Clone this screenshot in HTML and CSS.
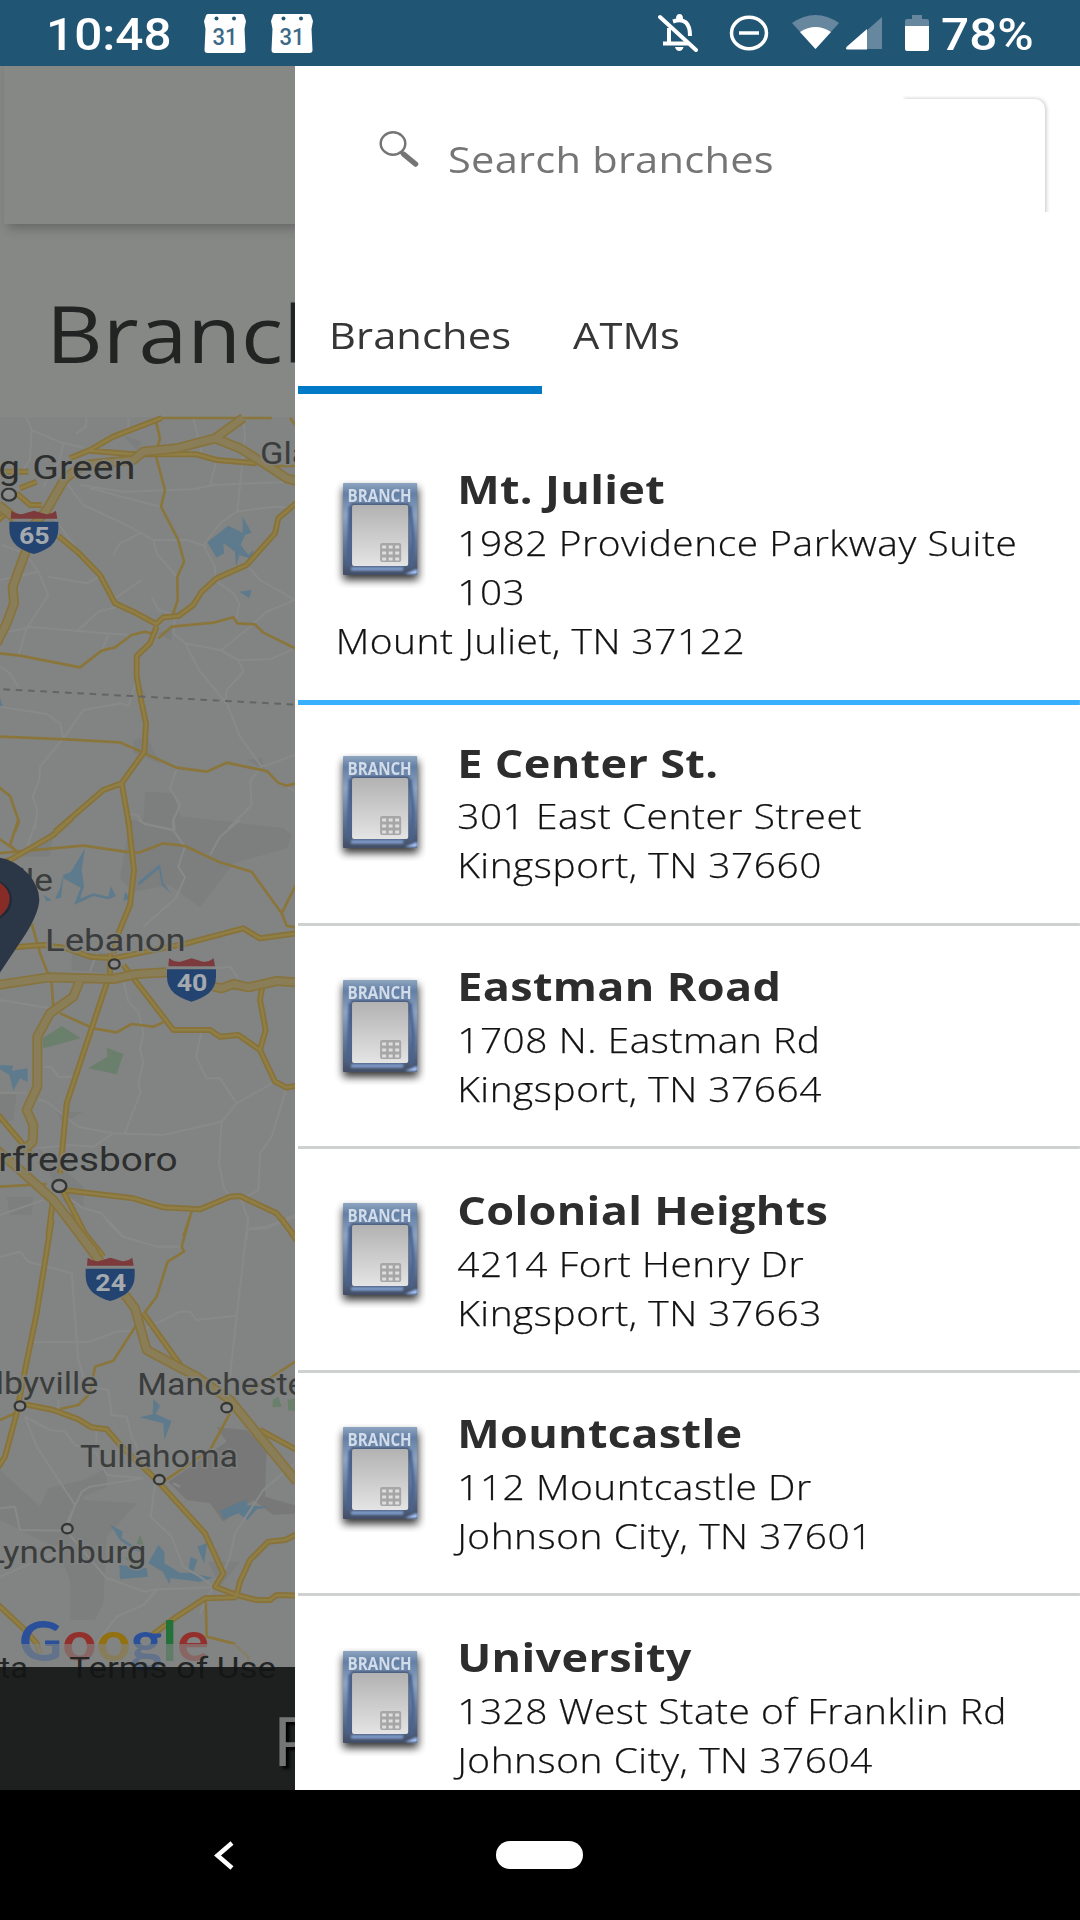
FILE: index.html
```html
<!DOCTYPE html>
<html lang="en">
<head>
    <meta charset="UTF-8">
    <meta name="viewport" content="width=device-width, initial-scale=1.0">
    <title>Branches</title>
    <link rel="stylesheet" href="styles.css">
</head>
<body>

<!-- shared symbols -->
<svg class="symbols" width="0" height="0">
    <defs>
        <linearGradient id="frame" x1="0" y1="0" x2="0" y2="1">
            <stop offset="0" stop-color="#8ea5c0"/>
            <stop offset=".12" stop-color="#637fa5"/>
            <stop offset=".35" stop-color="#8da3c2"/>
            <stop offset=".7" stop-color="#5f7598"/>
            <stop offset="1" stop-color="#434e66"/>
        </linearGradient>
        <linearGradient id="face" x1="0" y1="0" x2="0" y2="1">
            <stop offset="0" stop-color="#b2b2b2"/>
            <stop offset="1" stop-color="#e4e4e4"/>
        </linearGradient>
        <filter id="soft" x="-30%" y="-30%" width="160%" height="160%"><feGaussianBlur stdDeviation="4"/></filter>
        <filter id="smudge"><feGaussianBlur stdDeviation=".9"/></filter>
        <symbol id="branch" viewBox="0 0 92 108">
            <rect x="9" y="8" width="75" height="92" fill="#000" opacity=".8" filter="url(#soft)"/>
            <rect x="9" y="3" width="74" height="92" rx="1" fill="url(#frame)"/>
            <g filter="url(#smudge)">
                <path d="M16 26 14 86M76 26 79 60 77 88" fill="none" stroke="#48628f" stroke-width="3"/>
                <path d="M17 89h52" stroke="#86a4d8" stroke-width="3"/>
                <path d="M71 94l12-5v5z" fill="#a9c8ff"/>
                <rect x="17" y="23" width="58" height="64" rx="1" fill="#4c5f80"/>
            </g>
            <rect x="18" y="25" width="56" height="61" rx="2" fill="url(#face)"/>
            <rect x="46" y="63" width="21" height="19" rx="2" fill="#a6a6a6"/>
            <path d="M48 67h17M48 73h17M48 79h17" stroke="#dedede" stroke-width="3" stroke-dasharray="4 2.500"/>
            <text x="13.500" y="22.500" textLength="64" lengthAdjust="spacingAndGlyphs" class="branch-word">BRANCH</text>
        </symbol>
        <symbol id="calendar" viewBox="0 0 42 39">
            <path d="M4 0h34q2 0 2.500 3L42 7l-1.500 8 1 21q0 3-3 3h-35q-3 0-3-3l1-21L0 7l1.500-4Q2 0 4 0z" fill="#fff"/>
            <circle cx="12.500" cy="4.500" r="2" fill="#215574"/>
            <circle cx="30" cy="4.500" r="2" fill="#215574"/>
            <text x="8.500" y="30.500" textLength="25" lengthAdjust="spacingAndGlyphs" class="calendar-day">31</text>
        </symbol>
        <symbol id="shield" viewBox="0 0 150 132" overflow="visible">
            <path d="M6 0Q24 13 40 10L74 0l34 10q16 3 32-10l4 24H4z" fill="#7d3a3c"/>
            <path d="M0 33h147v22q0 30-22 50-20 16-51.500 25Q42 121 22 105 0 85 0 55z" fill="#234470"/>
        </symbol>
    </defs>
</svg>

<header class="statusbar">
    <div class="time"><span class="wide">10:48</span></div>
    <svg class="calendar" width="42" height="39"><use href="#calendar"/></svg>
    <svg class="calendar" width="42" height="39"><use href="#calendar"/></svg>
    <div class="status-icons">
        <svg width="40" height="38" viewBox="0 0 40 38" fill="none" stroke="#fff">
            <path d="M11 14v15M5 29.500h25" stroke-width="4"/>
            <path d="M15 7.500Q32 2 32 22" stroke-width="4"/>
            <path d="M18 5q0-5 3.500-5T25 5z M17 33h8.500q-1 4-4.200 4T17 33z" fill="#fff" stroke="none"/>
            <path d="M2 3l36 33" stroke-width="4" stroke-linecap="round"/>
        </svg>
        <svg class="dnd" width="40" height="38" viewBox="0 0 40 38">
            <ellipse cx="20" cy="19" rx="17.500" ry="15.700" fill="none" stroke="#fff" stroke-width="3.500"/>
            <path d="M10 19h20" stroke="#fff" stroke-width="3.500"/>
        </svg>
        <svg class="wifi" width="47" height="34" viewBox="0 0 47 34">
            <path d="M0 8Q23.500-8 47 8L23.500 34z" fill="#66879e"/>
            <path d="M8 17Q23.500 7 39 17L23.500 34z" fill="#fff"/>
        </svg>
        <svg class="signal" width="36" height="33" viewBox="0 0 36 33">
            <path d="M36 0v32H0z" fill="#66879e"/>
            <path d="M21 12v20.500H1q-2-1 0-3z" fill="#fff"/>
        </svg>
        <svg class="battery" width="24" height="37" viewBox="0 0 24 37">
            <path d="M7 0h10v4h5q2 0 2 2v7H0V6q0-2 2-2h5z" fill="#66879e"/>
            <path d="M0 11h24v23q0 2-2 2H2q-2 0-2-2z" fill="#fff"/>
        </svg>
        <div class="percent"><span class="wide">78%</span></div>
    </div>
</header>

<main class="app">
    <section class="page">
        <div class="topbar"></div>
        <h1 class="page-title"><span class="wide">Branches</span></h1>
        <svg class="map" width="295" height="1250" viewBox="0 21 885 3750">
            <defs>
                <g id="highways">
                    <path d="M-10 700 20 640 42 580 38 530 75 430 105 340 140 300 195 205 250 165 400 150 430 125 530 115 645 85 730 23M645 85 720 115 800 165 860 205 895 214M-5 285 45 325"/>
                    <g transform="translate(0 1230)">
                        <path d="M-5 495 145 472 340 477 410 462 500 457M640 500 665 505 700 492 745 502 830 483 890 487M240 480 220 530 150 580 112 650 112 800 80 870 100 915 98 965 60 1000M-10 990 60 1050 160 1140 285 1300"/>
                    </g>
                    <g transform="translate(0 2430)">
                        <path d="M200-10 300 125M375 225 405 265 440 390 590 470 690 540 890 785"/>
                    </g>
                </g>
                <g id="roads">
                    <path d="M210 145 270 120 340 80 485 24M270 122 400 133 590 133 650 150 770 160M-5 185H85M50 250 90 285 125 285M60 235 110 215M-5 330 30 300M175 378 235 428 300 495 345 580 400 605 465 640M465 645 490 622 535 618 580 585 605 545 650 505 740 465 825 370 835 325 890 278M470 650 450 700 410 738 410 800 425 880 438 940 433 1025 365 1120 310 1140 165 1265M365 1120 388 1250"/>
                    <g transform="translate(0 1230)">
                        <path d="M-5 130 30 120 160 45 215-5M385 0 402 150 390 255 355 340 340 400M330 400V465M320 490 200 850 180 1060M-5 385 130 375 200 385 270 410 340 415 560 370 730 325 780 355 890 340M370 435 520 630 630 630 660 650 715 645 780 690 825 785 860 803 890 797M787 500 780 540 797 630 780 690M-5 885 100 1010M190 1110 400 1135 490 1162 600 1168 690 1130 720 1128 830 1180 890 1255M190 1115 260 1250M160 1130 145 1250"/>
                    </g>
                    <g transform="translate(0 2430)">
                        <path d="M155 0 110 280 75 450 50 580 15 710-8 745M60 550 160 570 235 598 275 622 320 628 365 680 470 780 615 940 670 1060 645 1100 710 1125 770 1140 810 1140 830 1125 890 1127M215-10 310 110M430 280 545 440M780 630 890 690M710 1125 720 1085 750 1020 805 965 855 960 890 943M845-5 890 62M457 1245 530 1190 615 1135 710 1132M-5 1155 70 1225 110 1270 120 1300"/>
                    </g>
                </g>
            </defs>
            <rect y="21" width="885" height="3760" fill="#828483"/>

            <!-- urban areas, water, parks -->
            <g fill="#7d7f7e">
                <path d="M400 990 440 980 480 1060 400 1030zM370 75 425 95 410 120zM435 1145 520 1150 545 1230 430 1235zM470 670 515 655 515 690zM740 1050 785 1045 795 1080z"/>
                <path transform="translate(0 1230)" d="M390 0 560-10 850 25 875 45 860 85 700 130 600 262 510 195 400 215 360 175zM60 110 160 30 150 110zM215 390 330 400 330 460 215 450zM0 820 50 820 40 900 0 910zM170 875 250 875 190 910zM110 980 250 1100 250 1160 190 1150zM20 1130 100 1130 95 1185 30 1185z"/>
                <path transform="translate(0 2430)" d="M0 750 120 860 145 805 250 780 320 745 320 800 250 830 230 960 160 980 60 930 0 900zM250 840 410 850 320 950 310 1150 285 1200 210 1200 210 1080 170 980zM625 1025 720 1025 660 1100z"/>
            </g>
            <path transform="translate(0 2430)" fill="#787878" d="M650 622 740 630 800 690 795 830 890 857V880L820 885 760 840 670 905 630 850 560 840 505 785 680 665z"/>
            <g fill="#5e7a8d">
                <path d="M622 397 685 347 728 368 728 320 755 368 735 375 722 405 745 435 760 420 754 447 718 435 708 470 705 425 670 398 672 430 650 443zM718 545 755 540 748 565zM0 865 8 888H0z"/>
                <path transform="translate(0 1230)" d="M255 85 213 155 190 165 180 205 165 237 183 233 190 175 242 203 222 255 280 228 325 238 348 228 332 198 325 230 280 220 240 236 252 200 245 150zM130 225 155 240 140 244zM480 133 415 185 415 197 477 147 485 195 515 222 490 190zM375 215 390 235 370 243zM0 735 40 737 35 752 83 745 83 787 60 775 40 812 28 765 0 748z"/>
                <path transform="translate(0 2430)" d="M460 537 480 557 467 582 515 603 493 660 490 610 418 592 458 583zM660 872 740 838 740 855 810 862 770 868 742 900 715 880 670 898zM330 913 368 935 365 955 435 1000 400 990 360 960zM358 1035 440 1045 443 1070 360 1078zM445 1030 475 975 493 995 493 1030 540 1058 568 1058 640 1073 600 1085 512 1075 508 1092 488 1055zM565 1050 572 1010 592 1020 580 1055zM592 980 622 968 612 1030z"/>
            </g>
            <g fill="#6a7f6c">
                <path transform="translate(0 1230)" d="M128 655 185 618 242 655 130 685zM320 683 370 702 350 763 265 745 322 710z"/>
                <path transform="translate(0 2430)" d="M818 540 835 530 845 560 818 562zM863 540 885 535 885 572 865 572zM420 945 435 985 410 970zM370 1010 430 1030 410 1045z"/>
            </g>

            <g class="lane">
                <path d="M80 23 95 60 90 150 60 190M95 60 190 100 180 150 130 230M190 100 250 112M200 220 250 285 380 345 460 390 470 430 530 500M420 370 360 400 340 435M240 225 370 245 580 238 640 225 885 215M270 235 480 290M260 23 258 50 228 70M385 23 385 55M580 24 605 130M730 24 735 80 712 305M650 150 630 225M885 293 820 290 710 305 660 340 610 405 645 470 645 510 700 550 718 580 710 625M460 390H560L620 410M740 465 780 510 885 570 800 605 750 650 665 720M425 510 345 565M350 590 295 605 235 660M0 510 115 485 145 555 80 655 0 670M80 655 55 737M115 485 75 430 5 405M145 500 260 520 300 498M160 320 235 425M80 650 385 675M325 675 305 722M455 560 475 600 525 615 520 670 555 700 660 720 715 750 810 748 885 715M555 700 600 785 680 880 720 980 785 1070 885 1035M715 750 730 785 680 840 675 880M0 770 30 790 55 830M0 890 140 912 180 940 190 985 250 900 365 880 385 888 410 810M190 985 120 1070 118 1110 98 1160 112 1200 105 1260M785 1070 750 1115 755 1185 685 1255M800 1090 885 1145M530 1075 510 1135 540 1185 520 1230 525 1260M385 1212 410 1215 430 1240 525 1262"/>
                <path transform="translate(0 1230)" d="M0 540 150 565M108 0 80 90M415 0 435 12 520 30M518 0 522 35 555 80 535 140 555 172 527 235 430 320M720 0 660 50 630 105M290 400 270 455M370 480 385 545 415 575 430 640 420 690 430 725 415 790 422 815 375 940M605 635 588 710 620 775 660 775 710 850 825 785M710 850 665 905 490 945 340 940 235 920 140 845 115 838M665 905 657 1030 672 1105 690 1130M860 803 815 950 780 1000 775 1110 740 1130M130 740 155 742 175 770 220 770M0 820 80 818M340 940 280 980 210 975 110 985M200 1130 250 1165 305 1180 340 1225 370 1250 400 1260M0 1185 130 1140M720 1130 745 1200 740 1260M750 1225 800 1220 885 1185M640 445 690 440 715 475"/>
                <path transform="translate(0 2430)" d="M325 0 370 50 470 80 550 80M745-10 740 30 710 290 690 470M745 28 800 25 885-10M0 110 60 95 85 125 215 160 235 420 260 500 325 510 335 585 380 590 395 650 430 720M100 367 270 365 350 335 405 332M440 325 540 275 570 275 590 300 710 287M75 590 150 630 195 635 225 675 290 700 320 765 430 775M75 590 110 680 225 855 205 910M430 775 270 800 245 815 200 910M290 630 288 680M0 865 45 860 60 930 195 932M465 790 452 890 515 950 550 1040 600 1070 640 1100 600 1180M540 800 520 790M0 1070 190 990M205 940 320 1075 340 1080 430 1115 470 1108 640 1102M885 730 790 810 705 940 690 1010 665 1070M470 1110 430 1155 350 1190 290 1270M600 1105 480 1108M175 540 175 570"/>
            </g>

            <g class="minor">
                <path d="M467 30 480 85 467 135 495 240 483 290 535 390 552 455 532 500 533 570 515 625M475 685 515 650 640 638 700 622 712 640 765 643 790 668 890 717M0 730 60 737 240 772 305 722 345 712 395 675 435 665 460 672M0 980 200 988 360 997 430 1028 530 1073 620 1085 680 1058 800 1083 835 1118 860 1127 890 1120M-5 1130 30 1158 57 1235 45 1265M485 24H815M870 24 890 50M820 168H885"/>
                <path transform="translate(0 1230)" d="M-5 100 250 77 395 98 420 97 490 70 555 78 655 125 755 155 845 280 890 190M845 280 860 317 890 323M55 0 30 75 60 105M-5 55 60 100M95 310 120 400 155 490 160 560M180 580 280 625 350 637 395 612 460 620 490 607M575 1175 550 1250M0 1100 140 1092"/>
                <path transform="translate(0 2430)" d="M570-10 545 80 552 95 503 125 470 230 425 290 340 422 285 440 270 520 235 555 180 567M-5 602 55 575M690 580 630 690 490 785M890 422 740 520M617 1140 620 1250 700 1270 745 1310 745 1335"/>
            </g>
            <use href="#roads" class="road-edge"/>
            <use href="#roads" class="road-core"/>
            <use href="#highways" class="highway-edge"/>
            <use href="#highways" class="highway-core"/>
            <path d="M10 838 890 884" class="state-line"/>

            <use href="#shield" x="28" y="302" width="150" height="132"/>
            <use href="#shield" x="501" y="1645" width="150" height="132"/>
            <use href="#shield" x="257" y="2543" width="150" height="132"/>
            <g class="shield-number">
                <text x="57" y="401" textLength="92" lengthAdjust="spacingAndGlyphs">65</text>
                <text x="530" y="1744" textLength="92" lengthAdjust="spacingAndGlyphs">40</text>
                <text x="286" y="2643" textLength="92" lengthAdjust="spacingAndGlyphs">24</text>
            </g>

            <g class="town">
                <ellipse cx="27" cy="254" rx="21" ry="18"/>
                <ellipse cx="343" cy="1662" rx="16" ry="14"/>
                <ellipse cx="178" cy="2328" rx="21" ry="18"/>
                <ellipse cx="60" cy="2988" rx="16" ry="14"/>
                <ellipse cx="680" cy="2993" rx="16" ry="14"/>
                <ellipse cx="478" cy="3209" rx="16" ry="14"/>
                <ellipse cx="202" cy="3356" rx="16" ry="14"/>
            </g>
            <g class="label city">
                <text transform="translate(60 207) scale(1.125 1)" text-anchor="end">Bowling</text>
                <text x="97" y="207" textLength="309" lengthAdjust="spacingAndGlyphs">Green</text>
                <text transform="translate(533 2282) scale(1.140 1)" text-anchor="end">Murfreesboro</text>
            </g>
            <g class="label">
                <text transform="translate(780 163) scale(1.125 1)">Glasgow</text>
                <text transform="translate(159 1442) scale(1.150 1)" text-anchor="end">Nashville</text>
                <text x="135" y="1623" textLength="422" lengthAdjust="spacingAndGlyphs">Lebanon</text>
                <text transform="translate(295 2951) scale(1.110 1)" text-anchor="end">Shelbyville</text>
                <text transform="translate(412 2956) scale(1.110 1)">Manchester</text>
                <text x="240" y="3172" textLength="474" lengthAdjust="spacingAndGlyphs">Tullahoma</text>
                <text transform="translate(439 3458) scale(1.140 1)" text-anchor="end">Lynchburg</text>
            </g>

            <!-- selected branch pin -->
            <path d="M-5 1343Q40 1347 85 1392 118 1430 118 1470 116 1510 75 1575L-5 1695z" fill="#2b3746"/>
            <path d="M-5 1412Q36 1430 36 1470 34 1508-5 1528z" fill="#1f2a38"/>
            <path d="M-5 1415Q29 1435 29 1468 28 1500-5 1522z" fill="#862b26"/>

            <text class="google" x="57" y="3754" textLength="570" lengthAdjust="spacingAndGlyphs"><tspan fill="#2a509b">G</tspan><tspan fill="#93302c">o</tspan><tspan fill="#937010">o</tspan><tspan fill="#2a509b">g</tspan><tspan fill="#24713a">l</tspan><tspan fill="#93302c">e</tspan></text>
            <rect y="3702" width="885" height="69" fill="#828483" opacity=".65"/>
            <g class="terms">
                <text transform="translate(84 3803) scale(1.125 1)" text-anchor="end">Map data</text>
                <text x="208" y="3803" textLength="620" lengthAdjust="spacingAndGlyphs">Terms of Use</text>
            </g>
        </svg>
        <div class="page-footer"><span class="wide">Phone</span></div>
    </section>

    <aside class="drawer">
        <div class="search">
            <svg class="search-icon" width="40" height="36" viewBox="0 0 40 36" fill="none" stroke="#757575">
                <ellipse cx="14" cy="12.500" rx="12.300" ry="11.200" stroke-width="2.500"/>
                <path d="M22 21l4 3.500" stroke-width="4"/>
                <path d="M25 23.500 36.500 33" stroke-width="5.500" stroke-linecap="round"/>
            </svg>
            <span class="wide">Search branches</span>
        </div>
        <nav class="tabs">
            <div class="tab active"><span class="wide">Branches</span></div>
            <div class="tab"><span class="wide">ATMs</span></div>
        </nav>
        <div class="branch-list">
            <article class="branch selected">
                <svg class="branch-icon" viewBox="0 0 92 108" preserveAspectRatio="none"><use href="#branch"/></svg>
                <h2>Mt. Juliet</h2>
                <p>1982 Providence Parkway Suite<br>103<br>Mount Juliet, TN 37122</p>
            </article>
            <article class="branch">
                <svg class="branch-icon" viewBox="0 0 92 108" preserveAspectRatio="none"><use href="#branch"/></svg>
                <h2>E Center St.</h2>
                <p>301 East Center Street<br>Kingsport, TN 37660</p>
            </article>
            <article class="branch">
                <svg class="branch-icon" viewBox="0 0 92 108" preserveAspectRatio="none"><use href="#branch"/></svg>
                <h2>Eastman Road</h2>
                <p>1708 N. Eastman Rd<br>Kingsport, TN 37664</p>
            </article>
            <article class="branch">
                <svg class="branch-icon" viewBox="0 0 92 108" preserveAspectRatio="none"><use href="#branch"/></svg>
                <h2>Colonial Heights</h2>
                <p>4214 Fort Henry Dr<br>Kingsport, TN 37663</p>
            </article>
            <article class="branch">
                <svg class="branch-icon" viewBox="0 0 92 108" preserveAspectRatio="none"><use href="#branch"/></svg>
                <h2>Mountcastle</h2>
                <p>112 Mountcastle Dr<br>Johnson City, TN 37601</p>
            </article>
            <article class="branch">
                <svg class="branch-icon" viewBox="0 0 92 108" preserveAspectRatio="none"><use href="#branch"/></svg>
                <h2>University</h2>
                <p>1328 West State of Franklin Rd<br>Johnson City, TN 37604</p>
            </article>
        </div>
    </aside>
</main>

<footer class="navbar">
    <svg class="back" width="20" height="29" viewBox="0 0 20 29"><path d="M18 2 3.500 14.500 18 27" fill="none" stroke="#fff" stroke-width="4.500"/></svg>
    <div class="home"></div>
</footer>

</body>
</html>
```
FILE: styles.css
```css
* {
    margin: 0;
    padding: 0;
    box-sizing: border-box;
}

body {
    display: flex;
    flex-direction: column;
    width: 1080px;
    height: 1920px;
    overflow: hidden;
    background: #000;
    font-family: "Open Sans", sans-serif;
}

svg {
    display: block;
    flex: none;
}

.symbols {
    position: absolute;
}

.wide {
    display: inline-block;
    transform: scaleX(1.125);
    transform-origin: 0 0;
    white-space: nowrap;
}

/* status bar */
.statusbar {
    display: flex;
    align-items: center;
    height: 66px;
    padding-left: 46px;
    background: #215574;
    color: #fff;
    font-family: Roboto, sans-serif;
    font-size: 44px;
    font-weight: 500;
}

.time {
    width: 158px;
    padding-top: 4px;
}

.calendar {
    margin-right: 25px;
}

.calendar-day {
    font-family: Roboto, sans-serif;
    font-size: 24px;
    font-weight: 500;
    fill: #3d6886;
}

.status-icons {
    display: flex;
    align-items: center;
    margin-left: auto;
}

.dnd {
    margin-left: 31px;
}

.wifi {
    margin: 0 7px 3px 23px;
}

.battery {
    margin: 0 12px 0 23px;
}

.percent {
    width: 139px;
    padding-top: 4px;
}

/* page under the drawer */
.app {
    display: flex;
    height: 1724px;
    overflow: hidden;
}

.page {
    width: 295px;
    overflow: hidden;
    background: #868886;
}

.topbar {
    height: 158px;
    margin-left: 4px;
    box-shadow: 4px 4px 10px rgba(0, 0, 0, .25);
    clip-path: inset(0 0 -20px -4px);
}

.page-title {
    height: 193px;
    padding: 50px 0 0 46px;
    color: #222423;
    font-size: 78px;
    font-weight: 400;
    line-height: 118px;
}

.map {
    overflow: visible;
}

.lane,
.minor,
.road-edge,
.road-core,
.highway-edge,
.highway-core {
    fill: none;
    stroke-linejoin: round;
}

.lane {
    stroke: #888a89;
    stroke-width: 6;
}

.minor {
    stroke: #8a763b;
    stroke-width: 8;
}

.road-edge {
    stroke: #87723a;
    stroke-width: 18;
}

.road-core {
    stroke: #8f7e45;
    stroke-width: 8;
}

.highway-edge {
    stroke: #87733c;
    stroke-width: 30;
}

.highway-core {
    stroke: #8a7e59;
    stroke-width: 20;
}

.state-line {
    fill: none;
    stroke: #636564;
    stroke-width: 6;
    stroke-dasharray: 20 17;
}

.shield-number {
    font-family: Roboto, sans-serif;
    font-size: 72px;
    font-weight: 700;
    fill: #a3a9ae;
}

.town {
    fill: #8a8b8a;
    stroke: #343636;
    stroke-width: 7;
}

.label {
    font-family: Roboto, sans-serif;
    font-size: 92px;
    fill: #3b3d3d;
    stroke: #828483;
    stroke-width: 10;
    stroke-opacity: .7;
    paint-order: stroke;
}

.city {
    font-size: 102px;
    fill: #2d2f2f;
}

.google {
    font-family: Lato, sans-serif;
    font-size: 164px;
    font-weight: 700;
}

.terms {
    font-family: Roboto, sans-serif;
    font-size: 87px;
    fill: #242626;
}

.page-footer {
    position: relative;
    height: 123px;
    padding-left: 272px;
    background: rgba(19, 21, 21, .9);
    color: #747675;
    font-size: 68px;
    line-height: 145px;
    text-shadow: 3px 3px 3px #000;
}

/* drawer */
.drawer {
    width: 785px;
    padding: 32px 0 0 3px;
    overflow: hidden;
    background: #fff;
}

.search {
    position: relative;
    display: flex;
    align-items: flex-start;
    height: 120px;
    margin-right: 35px;
    padding-left: 81px;
    color: #757575;
    font-size: 37px;
    letter-spacing: .2px;
    line-height: 122px;
}

/* only the right end of the card casts a shadow */
.search::after {
    content: "";
    position: absolute;
    top: 1px;
    right: 0;
    width: 142px;
    height: 119px;
    border-radius: 0 10px 0 0;
    box-shadow: 1px 0 4px rgba(0, 0, 0, .24);
    clip-path: inset(-3px -8px 6px 0);
}

.search-icon {
    margin: 33px 29px 0 0;
}

.tabs {
    display: flex;
    height: 176px;
    padding-top: 67px;
    color: #363636;
    font-size: 37px;
    letter-spacing: .1px;
    line-height: 100px;
}

.tab {
    width: 244px;
    height: 109px;
    padding-left: 31px;
}

.tab.active {
    border-bottom: 8px solid #007ac6;
}

/* stretched like .wide, so widths here are 1/1.125 of what shows */
.branch-list {
    width: 695px;
    margin-top: 34.700px;
    transform: scaleX(1.125);
    transform-origin: 0 0;
}

.branch {
    height: 223.600px;
    padding: 32.700px 0 0 33.500px;
    border-bottom: 3px solid #cfd0d0;
}

.branch.selected {
    height: 276.500px;
    margin-bottom: -3.200px;
    border-bottom: 5px solid #38b0fe;
}

.branch-icon {
    float: left;
    width: 82px;
    height: 108px;
    margin: 18.500px 27.500px 0 -1.500px;
}

.branch-word {
    font-family: "Open Sans", sans-serif;
    font-size: 18px;
    font-weight: 700;
    fill: #d3dce9;
}

.branch h2 {
    color: #2d2d2d;
    font-size: 40px;
    font-weight: 700;
    letter-spacing: .3px;
    line-height: 56px;
}

.branch p {
    padding-top: .700px;
    color: #111;
    font-size: 34.500px;
    font-weight: 300;
    letter-spacing: .5px;
    line-height: 49px;
    white-space: nowrap;
    -webkit-text-stroke: .25px #111;
}

/* navigation bar */
.navbar {
    display: flex;
    align-items: center;
    height: 130px;
    padding: 0 0 0 214px;
}

.home {
    width: 87px;
    height: 28px;
    margin-left: 262px;
    border-radius: 14px;
    background: #fff;
}
```
